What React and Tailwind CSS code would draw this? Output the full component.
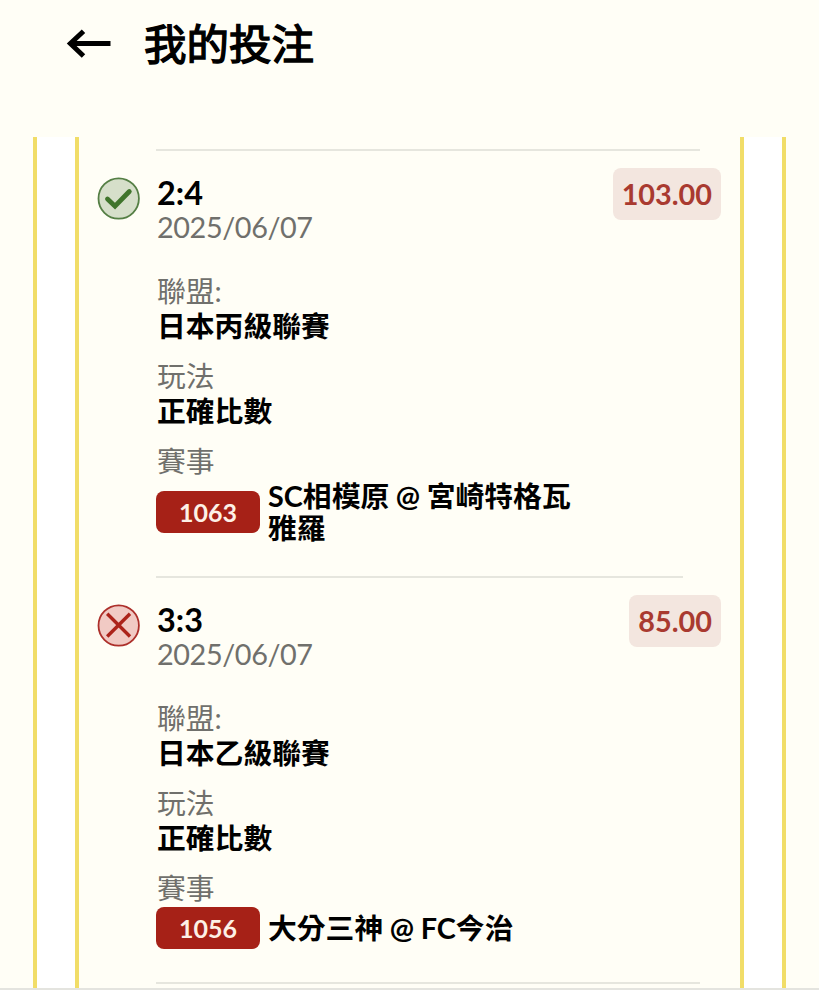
const bets = [
    {
        score: '2:4',
        date: '2025/06/07',
        amount: '103.00',
        won: true,
        league: '日本丙級聯賽',
        play: '正確比數',
        number: '1063',
        match: 'SC相模原 @ 宮崎特格瓦雅羅',
        divider: 'w-[527px]',
    },
    {
        score: '3:3',
        date: '2025/06/07',
        amount: '85.00',
        won: false,
        league: '日本乙級聯賽',
        play: '正確比數',
        number: '1056',
        match: '大分三神 @ FC今治',
        divider: 'w-[544px]',
    },
];

function BackArrow() {
    return (
        <svg width="46" height="32" viewBox="0 0 46 32" fill="none" stroke="#000" strokeWidth="5">
            <path d="M44.5 15.5H4.5" />
            <path d="M17.5 3.2L4.4 15.5L17.5 28" />
        </svg>
    );
}

function StatusIcon({ won }) {
    if (won) {
        return (
            <svg width="43" height="43" viewBox="0 0 43 43" fill="none">
                <circle cx="21.7" cy="21.5" r="20.2" fill="#d6dfca" stroke="#557f45" strokeWidth="1.8" />
                <path d="M10.5 22L18 29.2L32.3 14.5" stroke="#40752c" strokeWidth="4.8" strokeLinecap="round" />
            </svg>
        );
    }

    return (
        <svg width="43" height="43" viewBox="0 0 43 43" fill="none">
            <circle cx="21.7" cy="21.5" r="20.2" fill="#f1cac4" stroke="#ad302b" strokeWidth="1.8" />
            <path d="M10.2 9.7L33 32.5M33 9.7L10.2 32.5" stroke="#ac231a" strokeWidth="3.4" />
        </svg>
    );
}

function Field({ label, value }) {
    return (
        <div className="mb-[15px] pl-px">
            <div className="text-[#70706c]">{label}</div>
            <div className="font-bold text-black">{value}</div>
        </div>
    );
}

function Bet({ bet }) {
    return (
        <div className="flex pl-[18px] pt-[17px] text-[28.8px] leading-[35px]">
            <div className="w-[59px] shrink-0 pt-[9px]">
                <StatusIcon won={bet.won} />
            </div>
            <div className="min-w-0 flex-1">
                <div className="flex h-[106px] justify-between pr-[19px]">
                    <div className="pl-px pt-[7px]">
                        <div className="text-[32.4px] font-bold text-black">{bet.score}</div>
                        <div className="tracking-[-0.4px] text-[#70706c]">{bet.date}</div>
                    </div>
                    <div className="h-[52px] rounded-lg bg-[#f3e6df] px-[9px] font-bold leading-[53px] text-[#a93a30]">{bet.amount}</div>
                </div>
                <Field label="聯盟:" value={bet.league} />
                <Field label="玩法" value={bet.play} />
                <div className="pl-px text-[#70706c]">賽事</div>
                <div className="flex items-center pt-px">
                    <div className="h-[42px] w-[104px] shrink-0 rounded-lg bg-[#a62117] text-center text-[25px] font-bold leading-[42px] text-[#fdf0e6]">
                        {bet.number}
                    </div>
                    <div className="ml-[8px] w-[310px] font-bold leading-[31.5px] text-black">
                        <span className="relative top-px [word-spacing:-0.4px]">{bet.match}</span>
                    </div>
                </div>
                <div className={`mt-[33px] h-[2px] bg-[#e6e6de] ${bet.divider}`} />
            </div>
        </div>
    );
}

export default function App() {
    return (
        <div className="h-[1000px] w-full overflow-hidden bg-white font-['Lato','Noto_Sans_CJK_TC',sans-serif]">
            <div className="flex h-[990px] flex-col border-b-2 border-[#e4e4df] bg-[#fffef6]">
                <header className="flex h-[137px] shrink-0 items-start pl-[66px]">
                    <div className="pt-[28px]">
                        <BackArrow />
                    </div>
                    <h1 className="ml-[32px] pt-[14px] text-[42.5px] font-normal leading-[60px] text-black [-webkit-text-stroke:1.4px_black]">
                        我的投注
                    </h1>
                </header>
                <main className="ml-[33px] min-h-0 w-[753px] flex-1 border-x-4 border-[#f1dd68] bg-white px-[38px]">
                    <div className="h-full overflow-hidden border-x-4 border-[#f1dd68] bg-[#fffef6]">
                        <div className="ml-[77px] mt-[12px] h-[2px] w-[544px] bg-[#e6e6de]" />
                        {bets.map((bet) => (
                            <Bet key={bet.number} bet={bet} />
                        ))}
                    </div>
                </main>
            </div>
        </div>
    );
}
